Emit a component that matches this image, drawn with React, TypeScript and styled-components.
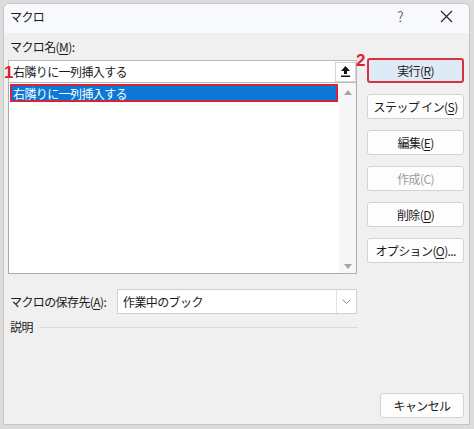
import React from "react";
import styled, { createGlobalStyle } from "styled-components";

const Global = createGlobalStyle`
  html, body { margin: 0; padding: 0; }
  body {
    background: #dcdcdc;
    font-family: "Noto Sans CJK JP", "Noto Sans", sans-serif;
    color: #1a1a1a;
    letter-spacing: -0.6px;
  }
  * { box-sizing: border-box; }
`;

const Dialog = styled.div`
  position: relative;
  margin: 3px;
  width: 467px;
  height: 422px;
  background: #f0f0f0;
  border: 1px solid #c4c4c4;
  border-radius: 6px 6px 0 0;
  display: flex;
  flex-direction: column;
  overflow: hidden;
`;

const TitleBar = styled.div`
  height: 29px;
  background: #f7f9fc;
  display: flex;
  align-items: center;
  padding: 0 0 5px 6px;
  font-size: 12px;
`;

const Title = styled.div`
  flex: 1;
`;

const TitleIcon = styled.div<{ $w: number }>`
  width: ${(p) => p.$w}px;
  height: 24px;
  display: flex;
  align-items: center;
  justify-content: center;
  font-size: 14px;
  font-weight: 300;
  color: #333;
`;

const Body = styled.div`
  flex: 1;
  display: flex;
  flex-direction: column;
  padding: 6px 5px 6px 4px;
`;

const MainRow = styled.div`
  display: flex;
  gap: 10px;
`;

const LeftCol = styled.div`
  width: 350px;
  display: flex;
  flex-direction: column;
`;

const Label = styled.div`
  font-size: 12px;
  line-height: 16px;
  height: 16px;
  padding-left: 2px;
  white-space: nowrap;
  u { text-decoration: underline; text-underline-offset: 2px; }
`;

const NameInput = styled.div`
  margin-top: 5px;
  height: 23px;
  background: #fff;
  border: 1px solid #b9b9b9;
  display: flex;
  align-items: center;
  padding-left: 4px;
  font-size: 12px;
  position: relative;
`;

const InputText = styled.div`
  flex: 1;
`;

const UpButton = styled.div`
  width: 21px;
  height: 20px;
  border: 1px solid #d4d4d4;
  background: #fff;
  display: flex;
  align-items: center;
  justify-content: center;
`;

const ListBox = styled.div`
  margin-top: -1px;
  height: 192px;
  background: #fff;
  border: 1px solid #ababab;
  display: flex;
`;

const ListItems = styled.div`
  flex: 1;
  padding: 1px 1px;
`;

const ListItem = styled.div<{ $selected?: boolean }>`
  height: 18px;
  line-height: 15px;
  font-size: 12px;
  padding-left: 1px;
  color: ${(p) => (p.$selected ? "#fff" : "#1a1a1a")};
  background: ${(p) => (p.$selected ? "#0a78d4" : "transparent")};
  border: 2px solid ${(p) => (p.$selected ? "#d0253a" : "transparent")};
`;

const ScrollBar = styled.div`
  width: 17px;
  background: #f7f7f7;
  display: flex;
  flex-direction: column;
  justify-content: space-between;
  align-items: center;
  padding: 7px 0 4px;
`;

const ButtonCol = styled.div`
  width: 97px;
  padding-top: 19px;
  display: flex;
  flex-direction: column;
  gap: 11px;
`;

const Button = styled.div<{ $primary?: boolean; $disabled?: boolean; $w?: number }>`
  width: ${(p) => (p.$w ? `${p.$w}px` : "100%")};
  height: 25px;
  border-radius: 3px;
  background: ${(p) => (p.$primary ? "#dfeaf7" : "#fdfdfd")};
  border: ${(p) => (p.$primary ? "2px solid #d8323f" : "1px solid #d3d3d3")};
  display: flex;
  align-items: center;
  justify-content: center;
  font-size: 12px;
  white-space: nowrap;
  color: ${(p) => (p.$disabled ? "#9a9a9a" : "#1a1a1a")};
  u { text-decoration: underline; text-underline-offset: 2px; }
`;

const StoreRow = styled.div`
  margin-top: 15px;
  display: flex;
  align-items: center;
  height: 25px;
`;

const StoreLabel = styled(Label)`
  width: 109px;
`;

const Select = styled.div`
  width: 240px;
  height: 25px;
  background: #fff;
  border: 1px solid #cfcfcf;
  display: flex;
  align-items: center;
  padding-left: 5px;
  font-size: 12px;
`;

const SelectText = styled.div`
  flex: 1;
`;

const Chevron = styled.div`
  width: 20px;
  height: 23px;
  border-left: 1px solid #e2e2e2;
  display: flex;
  align-items: center;
  justify-content: center;
`;

const DescRow = styled.div`
  margin-top: 5px;
  width: 350px;
  display: flex;
  align-items: center;
  gap: 6px;
`;

const Rule = styled.div`
  flex: 1;
  height: 1px;
  background: #dadada;
`;

const Footer = styled.div`
  margin-top: auto;
  display: flex;
  justify-content: flex-end;
`;

const Marker = styled.div<{ $x: number; $y: number }>`
  position: absolute;
  left: ${(p) => p.$x}px;
  top: ${(p) => p.$y}px;
  color: #e0202e;
  font-family: "Liberation Sans", Arial, sans-serif;
  font-weight: 700;
  font-size: 17px;
  line-height: 17px;
  letter-spacing: 0;
`;

export default function App() {
  return (
    <>
      <Global />
      <Dialog>
        <TitleBar>
          <Title>マクロ</Title>
          <TitleIcon $w={46}>?</TitleIcon>
          <TitleIcon $w={46}>
            <svg width="13" height="13" viewBox="0 0 13 13">
              <path d="M1 1 L12 12 M12 1 L1 12" stroke="#222" strokeWidth="1.1" />
            </svg>
          </TitleIcon>
        </TitleBar>
        <Body>
          <MainRow>
            <LeftCol>
              <Label>
                マクロ名(<u>M</u>):
              </Label>
              <NameInput>
                <InputText>右隣りに一列挿入する</InputText>
                <UpButton>
                  <svg width="11" height="13" viewBox="0 0 11 13">
                    <path d="M5.5 1 L10 6 L7 6 L7 9 L4 9 L4 6 L1 6 Z" fill="#111" />
                    <rect x="1" y="10.5" width="9" height="1.5" fill="#111" />
                  </svg>
                </UpButton>
              </NameInput>
              <ListBox>
                <ListItems>
                  <ListItem $selected>右隣りに一列挿入する</ListItem>
                </ListItems>
                <ScrollBar>
                  <svg width="8" height="5" viewBox="0 0 8 5">
                    <path d="M0 5 L4 0 L8 5 Z" fill="#a6a6a6" />
                  </svg>
                  <svg width="8" height="5" viewBox="0 0 8 5">
                    <path d="M0 0 L8 0 L4 5 Z" fill="#a6a6a6" />
                  </svg>
                </ScrollBar>
              </ListBox>
            </LeftCol>
            <ButtonCol>
              <Button $primary>
                実行(<u>R</u>)
              </Button>
              <Button>
                ステップ イン(<u>S</u>)
              </Button>
              <Button>
                編集(<u>E</u>)
              </Button>
              <Button $disabled>作成(C)</Button>
              <Button>
                削除(<u>D</u>)
              </Button>
              <Button>
                オプション(<u>O</u>)...
              </Button>
            </ButtonCol>
          </MainRow>
          <StoreRow>
            <StoreLabel>
              マクロの保存先(<u>A</u>):
            </StoreLabel>
            <Select>
              <SelectText>作業中のブック</SelectText>
              <Chevron>
                <svg width="9" height="5" viewBox="0 0 9 5">
                  <path d="M0.5 0.5 L4.5 4.5 L8.5 0.5" fill="none" stroke="#8a8a8a" strokeWidth="1" />
                </svg>
              </Chevron>
            </Select>
          </StoreRow>
          <DescRow>
            <Label>説明</Label>
            <Rule />
          </DescRow>
          <Footer>
            <Button $w={84}>キャンセル</Button>
          </Footer>
        </Body>
        <Marker $x={0} $y={60}>1</Marker>
        <Marker $x={352} $y={48}>2</Marker>
      </Dialog>
    </>
  );
}
